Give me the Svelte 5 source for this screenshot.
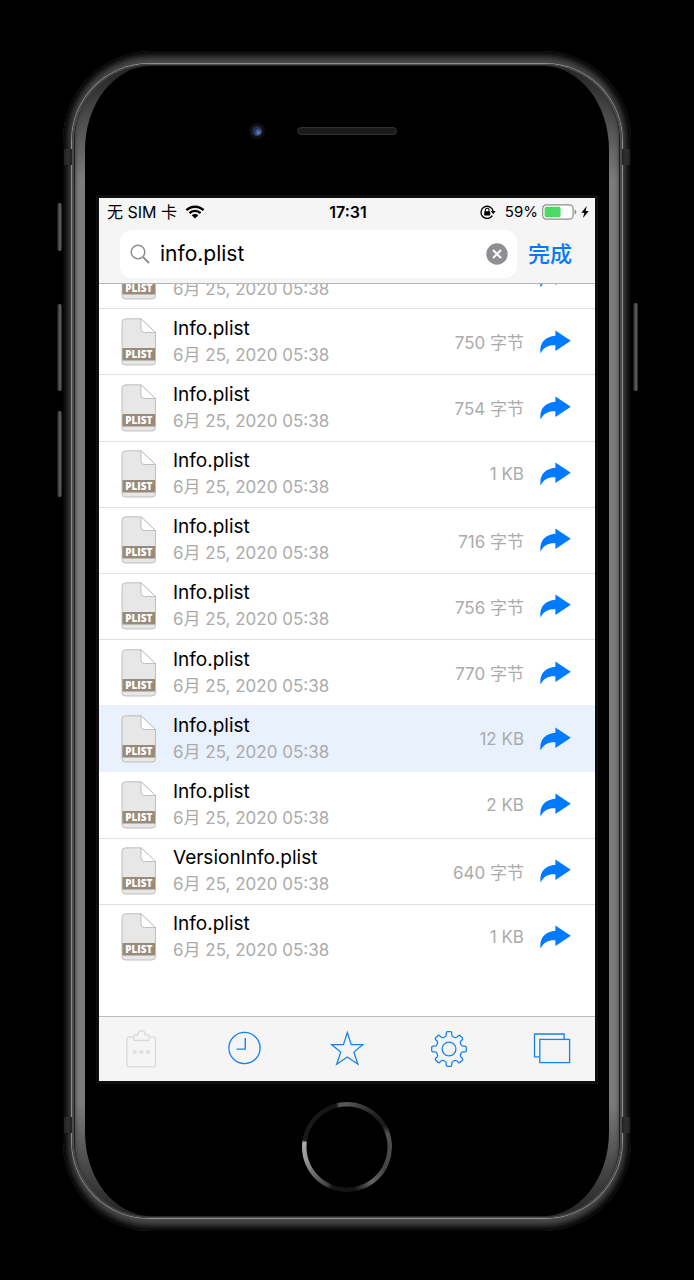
<script>
  let query = $state('info.plist');

  const stamp = '6月 25, 2020 05:38';
  const files = [
    { name: 'Info.plist', size: '' },
    { name: 'Info.plist', size: '750 字节' },
    { name: 'Info.plist', size: '754 字节' },
    { name: 'Info.plist', size: '1 KB' },
    { name: 'Info.plist', size: '716 字节' },
    { name: 'Info.plist', size: '756 字节' },
    { name: 'Info.plist', size: '770 字节' },
    { name: 'Info.plist', size: '12 KB', selected: true },
    { name: 'Info.plist', size: '2 KB' },
    { name: 'VersionInfo.plist', size: '640 字节' },
    { name: 'Info.plist', size: '1 KB' }
  ];

  // Outline of an eight-toothed gear centred on the origin.
  function gearPath() {
    const turn = (x, y, a) => {
      const c = Math.cos(a), s = Math.sin(a);
      return `${(x * c - y * s).toFixed(2)} ${(x * s + y * c).toFixed(2)}`;
    };
    let d = '';
    for (let i = 0; i < 8; i++) {
      const a = (i * Math.PI) / 4;
      const p = (x, y) => turn(x, y, a);
      d += i === 0 ? `M${p(-4.4, -12)}` : `A12.8 12.8 0 0 1 ${p(-4.4, -12)}`;
      d += `Q${p(-2.8, -12.6)} ${p(-2.8, -14)}L${p(-2.8, -16)}Q${p(-2.8, -17.3)} ${p(-1.5, -17.3)}`;
      d += `L${p(1.5, -17.3)}Q${p(2.8, -17.3)} ${p(2.8, -16)}L${p(2.8, -14)}Q${p(2.8, -12.6)} ${p(4.4, -12)}`;
    }
    return d + `A12.8 12.8 0 0 1 ${turn(-4.4, -12, 0)}Z`;
  }
  const gear = gearPath();
</script>

<div class="shell">
  <i class="key mute"></i>
  <i class="key up"></i>
  <i class="key down"></i>
  <i class="key power"></i>
  <i class="band lt"></i><i class="band rt"></i><i class="band lb"></i><i class="band rb"></i>
  <div class="rim">
    <div class="groove">
      <div class="bevel">
        <div class="glass">
          <div class="forehead">
            <i class="camera"></i>
            <i class="speaker"></i>
          </div>

          <main class="screen">
            <header>
              <div class="status">
                <div class="side">
                  <span>无 SIM 卡</span>
                  <svg width="20" height="14" viewBox="0 0 20 14" aria-hidden="true">
                    <path d="M1.4 5.2a12.4 12.4 0 0 1 17.2 0M4.4 8.1a8 8 0 0 1 11.2 0" fill="none" stroke="#000" stroke-width="2.3" />
                    <path d="M10 13.6 6.7 10.3a4.7 4.7 0 0 1 6.6 0Z" />
                  </svg>
                </div>
                <b>17:31</b>
                <div class="side end">
                  <svg class="lock" width="16" height="14" viewBox="0 0 16 14" aria-hidden="true">
                    <path d="M12.3 10.6A6.1 6.1 0 1 1 13.1 6.2" fill="none" stroke="#000" stroke-width="1.3" />
                    <path d="M10.8 6.1h4.8l-2.4 3.2Z" />
                    <rect x="4.2" y="6.2" width="6" height="4.4" rx=".6" />
                    <path d="M5.4 6.4V5a1.8 1.8 0 0 1 3.6 0v1.4" fill="none" stroke="#000" stroke-width="1.1" />
                  </svg>
                  <span>59%</span>
                  <svg width="35" height="16" viewBox="0 0 35 16" aria-hidden="true">
                    <rect x=".7" y=".9" width="30.4" height="14.2" rx="3.6" fill="#fff" stroke="#8e8e8e" stroke-width="1.2" />
                    <rect x="2.6" y="2.8" width="16" height="10.4" rx="1.6" fill="#4cd964" />
                    <path d="M32.6 5.4q1.8.8 1.8 2.6t-1.8 2.6Z" fill="#8e8e8e" />
                  </svg>
                  <svg width="8" height="12" viewBox="0 0 8 12" aria-hidden="true">
                    <path d="M5.8 0 .3 6.8h3L2 12l5.7-7H4.6Z" />
                  </svg>
                </div>
              </div>
              <div class="searchbar">
                <div class="field">
                  <svg width="20" height="20" viewBox="0 0 20 20" fill="none" stroke="#8e8e93" stroke-width="1.5" aria-hidden="true">
                    <circle cx="8" cy="8" r="6.8" />
                    <path d="m13 13 6 6" stroke-width="1.9" />
                  </svg>
                  <input type="text" aria-label="搜索" bind:value={query} />
                  <button class="clear" aria-label="清除" onclick={() => (query = '')}>
                    <svg width="22" height="22" viewBox="0 0 22 22" aria-hidden="true">
                      <circle cx="11" cy="11" r="10.7" fill="#8e8e93" />
                      <path d="m7 7 8 8m0-8-8 8" stroke="#fff" stroke-width="2" />
                    </svg>
                  </button>
                </div>
                <button class="done">完成</button>
              </div>
            </header>

            <section class="results">
              <ul>
                {#each files as file}
                  <li class:selected={file.selected}>
                    <svg class="doc" width="36" height="48" viewBox="0 0 36 48" aria-hidden="true">
                      <path d="M4.5.8H20L34.5 14.5v29A3.5 3.5 0 0 1 31 47H4.5A3.5 3.5 0 0 1 1 43.5v-39A3.7 3.7 0 0 1 4.5.8Z" fill="#e7e7e7" stroke="#b4b2af" stroke-width=".8" />
                      <path d="M20 .8V11a3.5 3.5 0 0 0 3.5 3.5h11Z" fill="#fff" stroke="#b4b2af" stroke-width=".8" />
                      <path d="M1.4 30h32.7v12.5H1.4Z" fill="#988b7b" />
                      <text x="17.8" y="40" text-anchor="middle">PLIST</text>
                    </svg>
                    <div class="info">
                      <span class="name">{file.name}</span>
                      <span class="date">{stamp}</span>
                    </div>
                    <span class="size">{file.size}</span>
                    <button class="share" aria-label="分享">
                      <svg width="32" height="24" viewBox="0 0 32 24" aria-hidden="true">
                        <path d="M15.4.4 30.8 10.8 15.4 21V15.2C8.8 14.8 3.6 16.8.6 23.6-1 14 4.6 6.4 15.4 5.8Z" fill="#007aff" />
                      </svg>
                    </button>
                  </li>
                {/each}
              </ul>
            </section>

            <nav>
              <button aria-label="剪贴板" disabled>
                <svg width="36" height="40" viewBox="-18 -20 36 40" stroke="#d9d9d9" aria-hidden="true">
                  <path d="M-7-10.9h-5.7a1.4 1.4 0 0 0-1.4 1.4v27a1.4 1.4 0 0 0 1.4 1.4h25.8a1.4 1.4 0 0 0 1.4-1.4v-27a1.4 1.4 0 0 0-1.4-1.4H8" />
                  <path d="M-6-13.1h2.4q.8 0 .8-1a3.2 3.2 0 0 1 6.6 0q0 1 .8 1H7a1 1 0 0 1 1 1v3.6a1 1 0 0 1-1 1H-6a1 1 0 0 1-1-1v-3.6a1 1 0 0 1 1-1Z" />
                  <circle cx="-6.3" cy="4" r="1.4" /><circle cx=".4" cy="4" r="1.4" /><circle cx="7.2" cy="4" r="1.4" />
                </svg>
              </button>
              <button aria-label="最近">
                <svg width="36" height="40" viewBox="-18 -20 36 40" aria-hidden="true">
                  <circle cx=".5" cy="0" r="15.6" />
                  <path d="M1.3-10V1.1H-7.5" stroke-width="1.4" />
                </svg>
              </button>
              <button aria-label="收藏">
                <svg width="36" height="40" viewBox="-19 -20 36 40" aria-hidden="true">
                  <path d="M.3-15.5 4.2-3.4H16L6.9 4.1l4 12.1L.3 9-10.3 16.2l4-12.1-9.1-7.5h11.8Z" stroke-linejoin="miter" />
                </svg>
              </button>
              <button aria-label="设置">
                <svg width="36" height="40" viewBox="-18 -21 36 40" aria-hidden="true">
                  <path d={gear} />
                  <circle r="6.9" />
                </svg>
              </button>
              <button aria-label="窗口">
                <svg width="38" height="40" viewBox="-19 -20 38 40" aria-hidden="true">
                  <path d="M-12.4 8.9h-5.1V-14h29.6v5.2" stroke-linejoin="miter" />
                  <rect x="-12.2" y="-8.6" width="29.8" height="23.2" stroke-linejoin="miter" />
                </svg>
              </button>
            </nav>
          </main>

          <div class="chin">
            <button class="home" aria-label="主屏幕"></button>
          </div>
        </div>
      </div>
    </div>
  </div>
</div>

<style>
  :global(body) {
    background: #000;
    font-family: Inter, 'Noto Sans CJK SC', sans-serif;
    color: #000;
  }
  button {
    border: 0;
    padding: 0;
    background: none;
    font: inherit;
    cursor: pointer;
  }
  svg { display: block; flex: none; }

  /* Device body */
  .shell {
    position: relative;
    margin: 51px 63px 48px;
    padding: 12px 8px;
    border-radius: 88px;
    background: #4a4a4a;
    box-shadow: inset 0 0 7px 5px #000;
  }
  .rim {
    padding: 1px;
    border-radius: 78px;
    background: #8c8c8c;
  }
  .groove {
    padding: 1px 3px;
    border-radius: 77px;
    background: #1c1c1c;
    box-shadow: inset 0 0 0 2px #4b4b4b;
  }
  .bevel {
    padding: 1px 10px;
    border-radius: 74px;
    background: linear-gradient(#222, #7c7c7c 10%, #7c7c7c 90%, #222);
    box-shadow: inset 0 0 4px #333;
  }
  .glass {
    padding: 0 14px;
    border-radius: 66px / 84px;
    background: #000;
  }
  .key {
    position: absolute;
    left: -6px;
    width: 5px;
    border-radius: 3px;
    background: linear-gradient(90deg, #111, #666 60%, #222);
  }
  .mute { top: 152px; height: 48px; }
  .up { top: 253px; height: 87px; }
  .down { top: 360px; height: 86px; }
  .power { left: auto; right: -7px; top: 252px; height: 88px; }
  .band {
    position: absolute;
    width: 8px;
    height: 16px;
    background: linear-gradient(90deg, #222, #303030, #222);
  }
  .lt, .rt { top: 98px; }
  .lb, .rb { bottom: 98px; }
  .lt, .lb { left: 1px; }
  .rt, .rb { right: 1px; }

  .forehead {
    display: grid;
    grid-template-columns: 1fr 100px 1fr;
    align-items: center;
    height: 130px;
    padding-bottom: 2px;
  }
  .camera {
    justify-self: end;
    width: 10px;
    height: 10px;
    margin-right: 32px;
    border: 3px solid #101010;
    border-radius: 50%;
    background: radial-gradient(circle at 65% 65%, #5b87bd, #28305f 45%, #161a38);
  }
  .speaker {
    grid-column: 2;
    height: 6px;
    border: 1px solid #303030;
    border-radius: 5px;
    background: #1b1b1b;
  }

  /* Screen */
  .screen {
    display: flex;
    flex-direction: column;
    background: #fff;
    box-shadow: 0 0 0 3px #0e0e0e;
  }
  header {
    background: #f5f5f5;
    border-bottom: 1px solid #b5b5b5;
  }
  .status {
    display: grid;
    grid-template-columns: 1fr auto 1fr;
    align-items: center;
    height: 28px;
    padding: 0 6px 0 8px;
    font-size: 16px;
    line-height: 20px;
  }
  .status b { font-weight: 600; }
  .side { display: flex; align-items: center; gap: 8px; }
  .end { justify-content: flex-end; gap: 4px; font-size: 15px; }
  .lock { margin-right: 5px; }
  .searchbar {
    display: flex;
    align-items: center;
    gap: 11px;
    padding: 4px 23px 5px 21px;
  }
  .field {
    display: flex;
    flex: 1;
    align-items: center;
    gap: 10px;
    min-width: 0;
    height: 48px;
    padding: 0 9px 0 10px;
    box-sizing: border-box;
    border-radius: 12px;
    background: #fff;
  }
  input {
    flex: 1;
    min-width: 0;
    padding: 0;
    border: 0;
    outline: 0;
    background: none;
    color: #000;
    font: inherit;
    font-size: 21px;
    line-height: 28px;
  }
  .done {
    color: #007aff;
    font-size: 22px;
    font-weight: 500;
    line-height: 32px;
  }

  .results {
    height: 732px;
    overflow: hidden;
  }
  ul {
    display: grid;
    grid-auto-rows: 1fr;
    height: 728px;
    margin: -41px 0 0;
    padding: 0;
    list-style: none;
  }
  li {
    display: flex;
    align-items: center;
    padding: 0 23px 0 22px;
    border-bottom: 1px solid #e0e0e0;
  }
  li:last-child { border-bottom-color: transparent; }
  .selected { background: #e9f1fc; border-bottom-color: #e9f1fc; }
  li:has(+ .selected) { border-bottom-color: #eef2f8; }
  .doc text {
    fill: #fff;
    font: 800 10px 'Open Sans', sans-serif;
  }
  .info {
    display: flex;
    flex: 1;
    flex-direction: column;
    min-width: 0;
    padding-left: 16px;
    line-height: 26px;
    white-space: nowrap;
  }
  .name { font-size: 19px; }
  .date { color: #ababab; font-size: 17px; }
  .size { color: #ababab; font-size: 17px; white-space: nowrap; }
  .share { margin-left: 16px; }

  nav {
    display: flex;
    align-items: center;
    justify-content: space-between;
    height: 62px;
    padding: 0 24px 2px;
    border-top: 1px solid #bcbcbc;
    background: #f5f5f5;
  }
  nav svg {
    fill: none;
    stroke-linejoin: round;
    stroke-width: 1.3;
  }
  nav button:not(:disabled) svg { stroke: #1583ee; }

  .chin {
    display: flex;
    align-items: center;
    justify-content: center;
    height: 132px;
    padding-bottom: 3px;
  }
  .home {
    width: 90px;
    height: 90px;
    border-radius: 50%;
    background:
      radial-gradient(circle, #000 40px, transparent 41px),
      conic-gradient(#555, #222 40deg, #1a1a1c 60deg, #505054 72deg, #444 120deg, #666 145deg, #141416 170deg, #141416 200deg, #444 208deg, #999 255deg, #aaa 276deg, #1a1a1c 279deg, #141416 345deg, #555 350deg);
  }
</style>
